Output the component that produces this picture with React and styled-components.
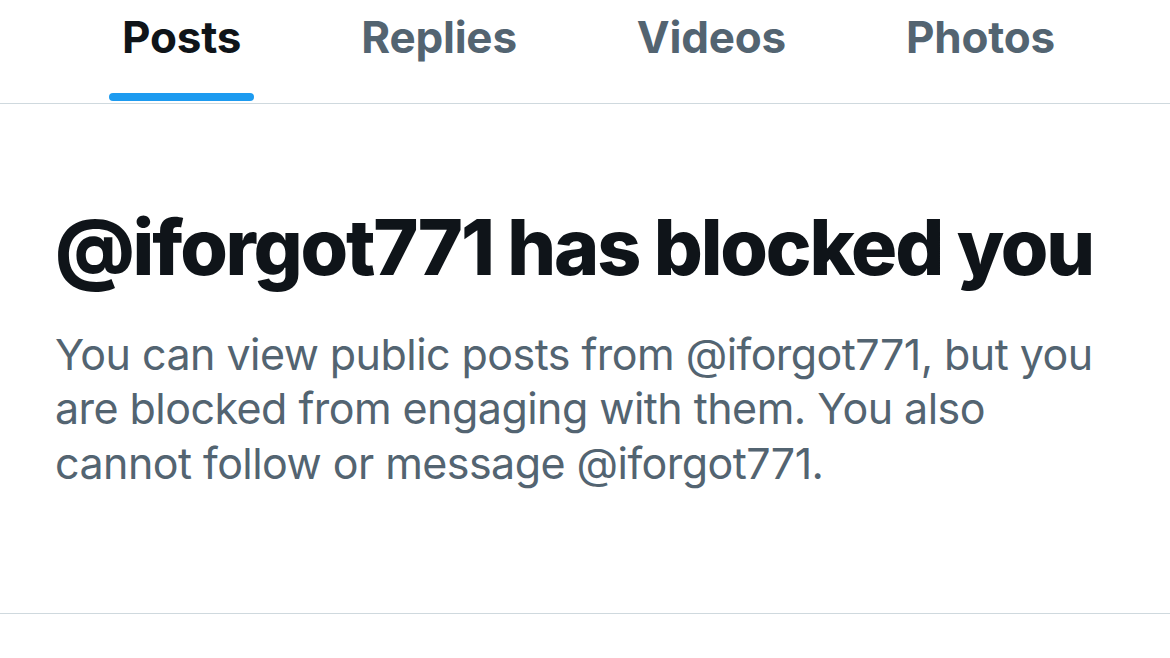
import React from "react";
import styled, { createGlobalStyle } from "styled-components";

const Global = createGlobalStyle`
  *, *::before, *::after { box-sizing: border-box; }
  html, body { margin: 0; padding: 0; background: #ffffff; }
  body { font-family: Inter, "Noto Sans", sans-serif; -webkit-font-smoothing: antialiased; }
`;

const Page = styled.div`
  width: 1170px;
  height: 658px;
  background: #ffffff;
  overflow: hidden;
  display: flex;
  flex-direction: column;
`;

const TabBar = styled.nav`
  display: flex;
  flex-shrink: 0;
  height: 103.5px;
  border-bottom: 1.5px solid #cfd9de;
  padding-left: 62px;
`;

const Tab = styled.div`
  position: relative;
  display: flex;
  align-items: flex-start;
  padding: 10px 60px 0 60px;
  font-size: 44px;
  font-weight: 700;
  letter-spacing: -0.2px;
  color: ${(p) => (p.$active ? "#0f1419" : "#536471")};
`;

const Label = styled.span`
  position: relative;
  display: inline-block;
`;

const Indicator = styled.span`
  position: absolute;
  left: -13px;
  right: -13px;
  top: 83px;
  height: 8px;
  border-radius: 4px;
  background: #1d9bf0;
`;

const Body = styled.section`
  display: flex;
  flex-direction: column;
  flex-shrink: 0;
  padding: 95px 40px 0 55px;
  height: 510px;
  border-bottom: 1.5px solid #cfd9de;
`;

const Heading = styled.h1`
  margin: 0;
  font-size: 77px;
  font-weight: 800;
  letter-spacing: -2.2px;
  line-height: 96px;
  color: #0f1419;
  white-space: nowrap;
`;

const Message = styled.p`
  margin: 32px 0 0 0;
  width: 1060px;
  font-size: 43px;
  font-weight: 400;
  letter-spacing: -0.55px;
  line-height: 54.5px;
  color: #536471;
`;

const tabs = ["Posts", "Replies", "Videos", "Photos"];

export default function App() {
  return (
    <Page>
      <Global />
      <TabBar>
        {tabs.map((t, i) => (
          <Tab key={t} $active={i === 0}>
            <Label>
              {t}
              {i === 0 && <Indicator />}
            </Label>
          </Tab>
        ))}
      </TabBar>
      <Body>
        <Heading>@iforgot771 has blocked you</Heading>
        <Message>
          You can view public posts from @iforgot771, but you are blocked from
          engaging with them. You also cannot follow or message @iforgot771.
        </Message>
      </Body>
    </Page>
  );
}
